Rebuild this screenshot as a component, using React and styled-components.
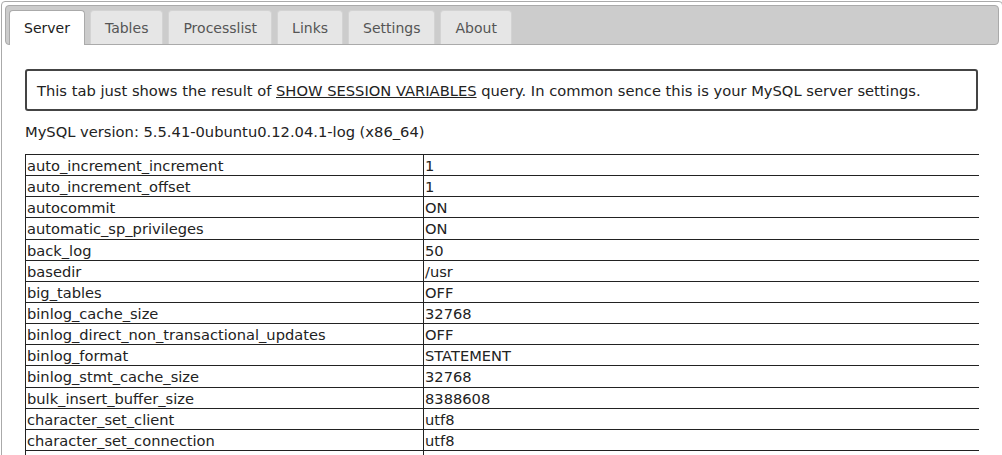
import React from 'react'
import styled, { createGlobalStyle } from 'styled-components'

const GlobalStyle = createGlobalStyle`
  html, body {
    margin: 0;
    padding: 0;
    background: #fff;
    overflow: hidden;
  }
  body {
    font-family: "DejaVu Sans", Verdana, sans-serif;
    font-size: 14.7px;
    color: #222;
  }
`

const tabs = ['Server', 'Tables', 'Processlist', 'Links', 'Settings', 'About']

const variables = [
    ['auto_increment_increment', '1'],
    ['auto_increment_offset', '1'],
    ['autocommit', 'ON'],
    ['automatic_sp_privileges', 'ON'],
    ['back_log', '50'],
    ['basedir', '/usr'],
    ['big_tables', 'OFF'],
    ['binlog_cache_size', '32768'],
    ['binlog_direct_non_transactional_updates', 'OFF'],
    ['binlog_format', 'STATEMENT'],
    ['binlog_stmt_cache_size', '32768'],
    ['bulk_insert_buffer_size', '8388608'],
    ['character_set_client', 'utf8'],
    ['character_set_connection', 'utf8'],
    ['character_set_database', 'utf8'],
]

const App = () => {
    return (
        <>
            <GlobalStyle />
            <Widget>
                <TabNav>
                    {tabs.map((tab, i) => (
                        <Tab key={tab} active={i === 0}>{tab}</Tab>
                    ))}
                </TabNav>
                <Panel>
                    <InfoBox>
                        This tab just shows the result of <QueryLink>SHOW SESSION VARIABLES</QueryLink> query.
                        In common sence this is your MySQL server settings.
                    </InfoBox>
                    <Version>MySQL version: 5.5.41-0ubuntu0.12.04.1-log (x86_64)</Version>
                    <VarTable>
                        <tbody>
                            {variables.map(([name, value]) => (
                                <tr key={name}>
                                    <NameCell>{name}</NameCell>
                                    <ValueCell>{value}</ValueCell>
                                </tr>
                            ))}
                        </tbody>
                    </VarTable>
                </Panel>
            </Widget>
        </>
    )
}

export default App

const Widget = styled.div`
    box-sizing: border-box;
    margin: 1px 0 0 1px;
    width: 1002px;
    height: 470px;
    padding: 3px;
    border: 1px solid #aaa;
    border-radius: 4px;
    background: #fff;
`

const TabNav = styled.ul`
    display: flex;
    gap: 5px;
    margin: 0;
    padding: 4px 3px 0;
    list-style: none;
    height: 34px;
    background: #ccc;
    border: 1px solid #aaa;
    border-radius: 4px;
`

const Tab = styled.li`
    box-sizing: border-box;
    flex: none;
    height: ${p => (p.active ? '35px' : '34px')};
    padding: 1px 14px 0;
    line-height: 33px;
    font-size: 14px;
    color: ${p => (p.active ? '#212121' : '#555')};
    background: ${p => (p.active ? '#fff' : '#e6e6e6')};
    border: 1px solid ${p => (p.active ? '#aaa' : '#d3d3d3')};
    border-bottom: none;
    border-radius: 4px 4px 0 0;
    cursor: pointer;
`

const Panel = styled.div`
    padding: 24px 20px 0;
`

const InfoBox = styled.div`
    box-sizing: border-box;
    width: 953px;
    height: 42px;
    padding: 0 10px;
    line-height: 40px;
    border: 2px solid #444;
    border-radius: 3px;
    white-space: nowrap;
`

const QueryLink = styled.span`
    text-decoration: underline;
`

const Version = styled.div`
    margin: 11px 0 0;
    line-height: 20px;
`

const VarTable = styled.table`
    margin-top: 12px;
    width: 954px;
    border-collapse: collapse;
    font-size: 14.65px;
    color: #222;
    td {
        padding: 3px 1px 1px;
        line-height: 16.14px;
        border-top: 1px solid #222;
        border-bottom: 1px solid #222;
        border-left: 1px solid #222;
        white-space: nowrap;
    }
`

const NameCell = styled.td`
    width: 395px;
`

const ValueCell = styled.td``
